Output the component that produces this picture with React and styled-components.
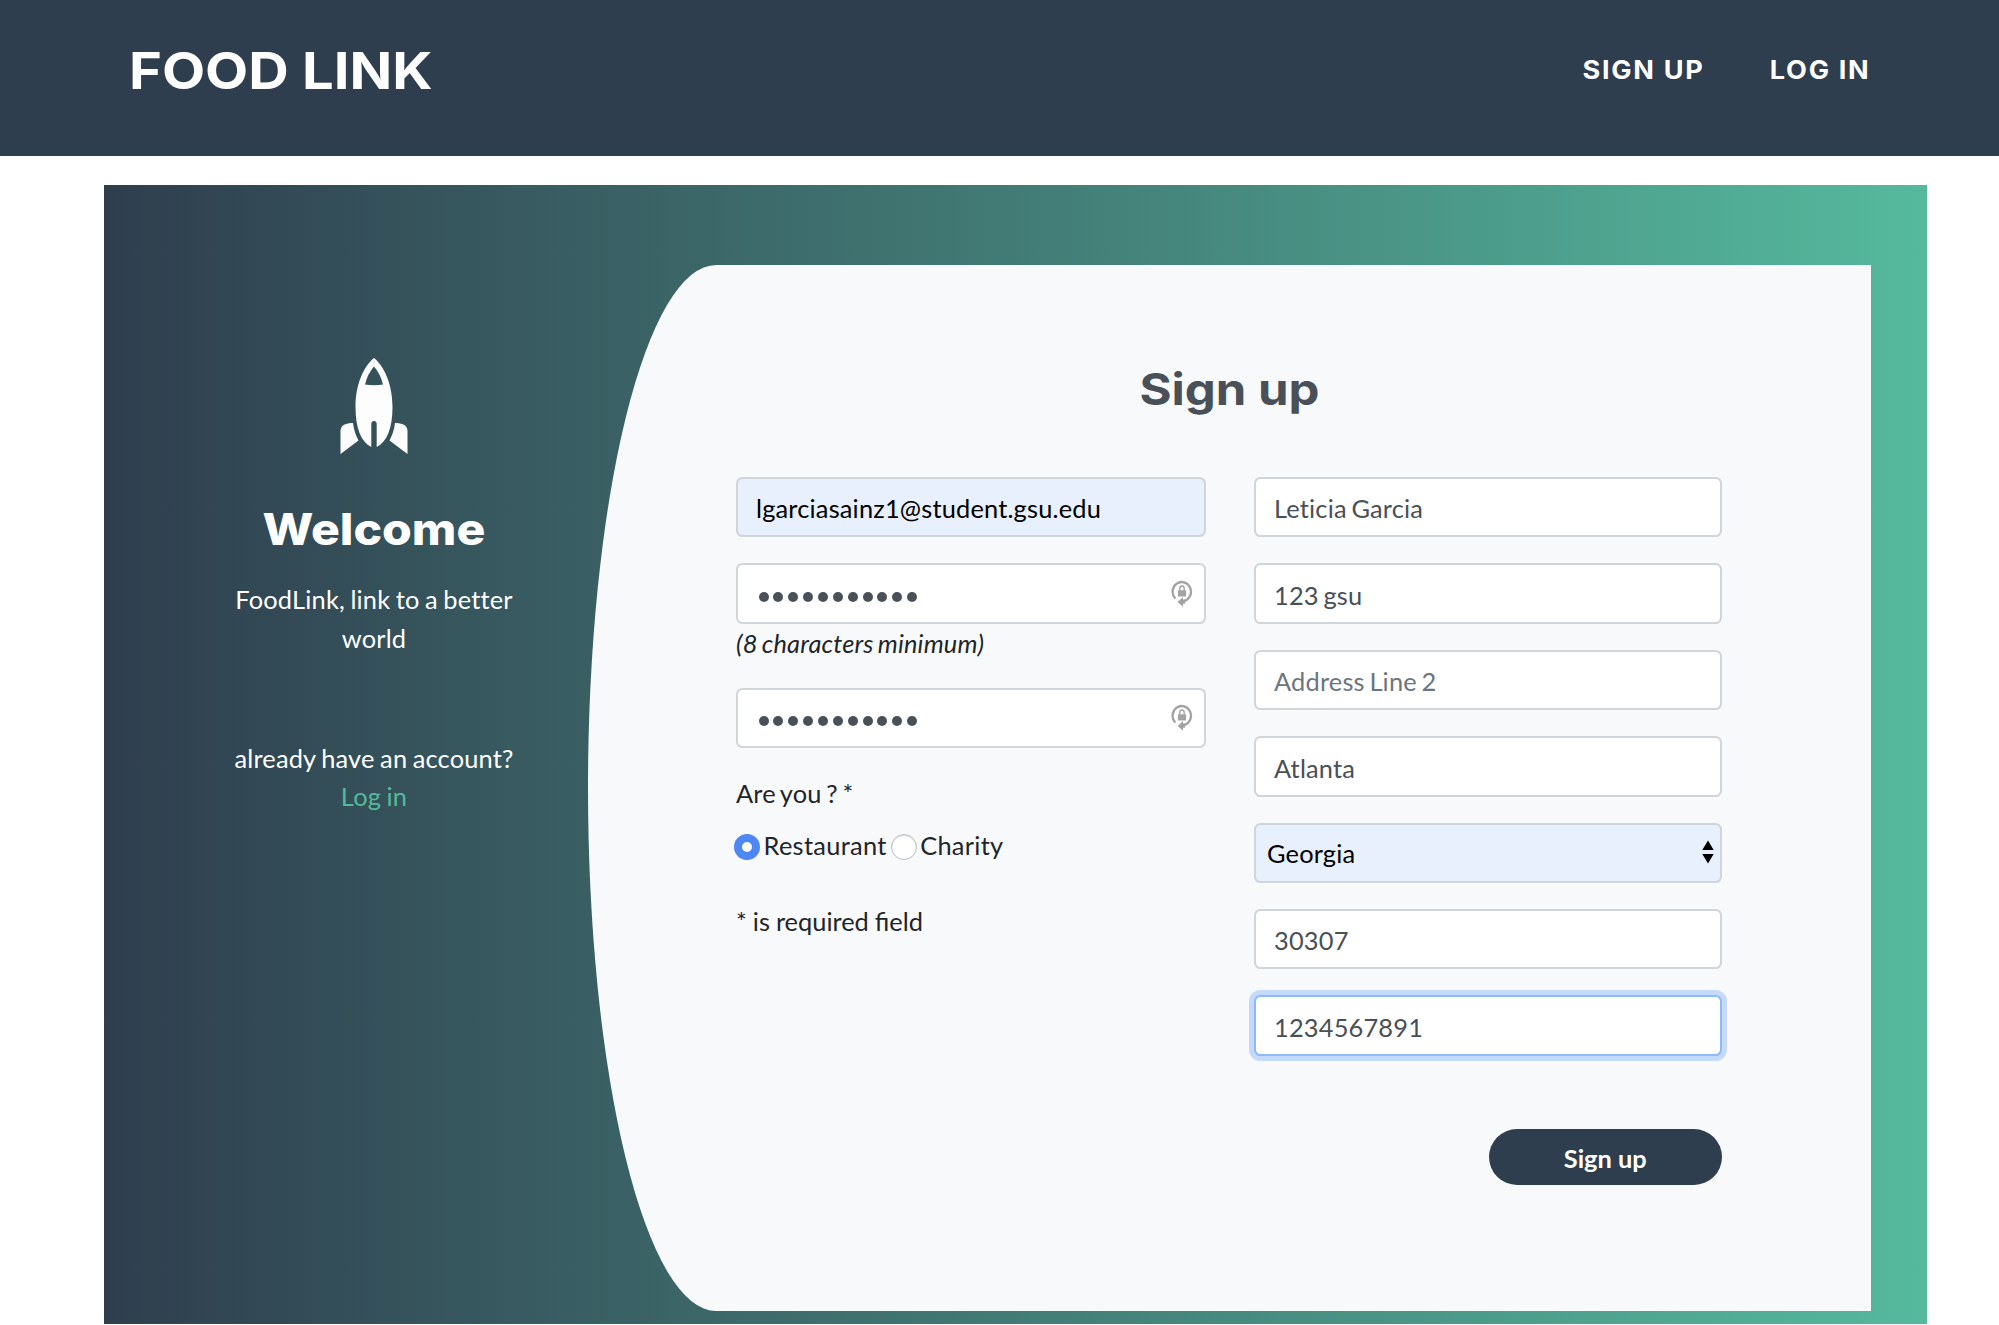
import React from 'react';
import styled, { createGlobalStyle } from 'styled-components';

const NAVY = '#2f3e4e';
const GREEN = '#55b99d';

const GlobalStyle = createGlobalStyle`
  *, *::before, *::after { box-sizing: border-box; }
  body {
    margin: 0;
    background: #fff;
    color: #212529;
    font: 400 25.4px/38.4px Lato, "Open Sans", sans-serif;
    letter-spacing: 0.18px;
    word-spacing: -2px;
  }
  h1, h2, h3, p { margin: 0; }
  a { color: inherit; text-decoration: none; }
`;

const Display = styled.span`
  display: inline-block;
  font-family: Inter, "Open Sans", sans-serif;
  font-size: ${(p) => p.$size}px;
  font-weight: ${(p) => p.$weight || 700};
  letter-spacing: ${(p) => p.$track || 0}px;
  word-spacing: 0;
  line-height: 1.2;
  white-space: nowrap;
  transform: scaleX(${(p) => p.$stretch || 1});
  transform-origin: ${(p) => p.$origin || 'center'};
`;

const Header = styled.header`
  display: flex;
  justify-content: space-between;
  align-items: flex-start;
  height: 156px;
  padding: 41px 129px 0 129px;
  background: ${NAVY};
  color: #fff;
`;

const Brand = styled.h1`
  line-height: 0;
`;

const Nav = styled.nav`
  display: flex;
  gap: 71px;
  padding-top: 9px;
`;

const Hero = styled.main`
  display: grid;
  grid-template-columns: 428px 1fr;
  width: 1823px;
  height: 1139.5px;
  margin: 28.5px 0 1px 104px;
  padding: 80px 56px 13.5px;
  background: linear-gradient(to right, ${NAVY}, ${GREEN});
`;

const Aside = styled.aside`
  display: flex;
  flex-direction: column;
  align-items: center;
  padding: 93px 64px 0;
  color: #fff;
  text-align: center;
`;

const Rocket = styled.svg`
  display: block;
  width: 68px;
  height: 96px;
  margin-bottom: 49px;
`;

const Tagline = styled.p`
  width: 300px;
  margin-top: 24.5px;
  word-spacing: -1.2px;
`;

const Account = styled.p`
  margin-top: 81.5px;
  word-spacing: -1.2px;
  a { display: block; color: ${GREEN}; }
`;

const Panel = styled.section`
  display: flex;
  flex-direction: column;
  padding: 95px 149px 0 148px;
  background: #f8f9fb;
  border-radius: 10% 0 0 10% / 50% 0 0 50%;
`;

const Title = styled.h3`
  display: flex;
  justify-content: center;
  height: 117.5px;
  padding-top: 3px;
  color: #495057;
`;

const Columns = styled.div`
  display: grid;
  grid-template-columns: 470px 468px;
  column-gap: 48px;
`;

const Column = styled.div`
  display: flex;
  flex-direction: column;
  gap: 26px;
`;

const Field = styled.div`
  display: flex;
  align-items: center;
  justify-content: space-between;
  height: 60.4px;
  padding: ${(p) => (p.$select ? '1px 6px 0 11px' : '3px 11px 0 18px')};
  border: 2px solid ${(p) => (p.$focus ? '#8dbaf8' : '#d0d5da')};
  border-radius: 6.4px;
  background: ${(p) => (p.$filled ? '#e8effd' : '#fff')};
  color: ${(p) => (p.$filled ? '#000' : p.$placeholder ? '#6c757d' : '#495057')};
  box-shadow: ${(p) => (p.$focus ? '0 0 0 5px #c5dafa' : 'none')};
  font-variant-ligatures: none;
`;

const Dots = styled.span`
  display: flex;
  gap: 4.87px;
  padding: 4px 0 0 2.5px;
`;

const Dot = styled.i`
  width: 10px;
  height: 10px;
  border-radius: 50%;
  background: #495057;
`;

const LockIcon = styled.svg`
  width: 22px;
  height: 28px;
  margin-top: -4px;
`;

const Hint = styled.em`
  display: block;
  height: 38px;
`;

const PasswordGroup = styled.div``;

const Question = styled.p`
  word-spacing: -2px;
`;

const Radios = styled.div`
  display: flex;
  align-items: center;
  margin: -13px 0 0 -2px;
  letter-spacing: 0.3px;
`;

const Radio = styled.span`
  width: 26px;
  height: 26px;
  margin: 5px 3.5px 0 ${(p) => (p.$checked ? 0 : 4)}px;
  border-radius: 50%;
  border: ${(p) => (p.$checked ? '8.5px solid #4d87f6' : '1.3px solid #bdbdbd')};
  background: #fff;
  box-shadow: ${(p) => (p.$checked ? 'none' : 'inset 0 1px 1px #ddd')};
`;

const Required = styled.p`
  margin-top: 12px;
  letter-spacing: 0;
  word-spacing: -0.5px;
`;

const Arrows = styled.svg`
  width: 12px;
  height: 24px;
  margin-top: -2px;
`;

const Submit = styled.button`
  align-self: flex-end;
  width: 233.5px;
  height: 56px;
  margin-top: 73.5px;
  padding: 1px 0 0;
  border: 0;
  border-radius: 28px;
  background: ${NAVY};
  color: #fff;
  font: 700 25.4px/38px Lato, sans-serif;
`;

const Password = () => (
  <Field>
    <Dots>{Array.from({ length: 11 }, (_, i) => <Dot key={i} />)}</Dots>
    <LockIcon viewBox="0 0 22 28" fill="none">
      <path d="M4.3 19.6A9.2 9.7 0 1 1 13.4 22" stroke="#a3a3a3" strokeWidth="2.3" />
      <path d="M6.6 22.9l5.4-4.9v2.6h2v4.2h-2v2.9z" fill="#a3a3a3" />
      <rect x="6.9" y="11.3" width="8.2" height="6.2" rx=".5" fill="#a3a3a3" />
      <path d="M8.8 11.5V9.2a2.2 2.2 0 0 1 4.4 0v2.3" stroke="#a3a3a3" strokeWidth="1.4" />
    </LockIcon>
  </Field>
);

export default function App() {
  return (
    <>
      <GlobalStyle />
      <Header>
        <Brand>
          <Display $size={50.5} $stretch={1.11} $origin="left">FOOD LINK</Display>
        </Brand>
        <Nav>
          <a href="#signup"><Display $size={25.4} $weight={750} $track={1.6} $stretch={1.065} $origin="right">SIGN UP</Display></a>
          <a href="#login"><Display $size={25.4} $weight={750} $track={1.6} $stretch={1.065} $origin="right">LOG IN</Display></a>
        </Nav>
      </Header>
      <Hero>
        <Aside>
          <Rocket viewBox="0 0 68 96" fill="#fdfdfd">
            <path
              fillRule="evenodd"
              d="M34 0C44 8 52.5 26 52.5 49C52.5 70 47 84 36.7 89V66Q36.7 63 34 63Q31.3 63 31.3 66V89C21 84 15.5 70 15.5 49C15.5 26 24 8 34 0ZM34 8.5Q27.5 16 25 26.5Q34 28 43 26.5Q40.5 16 34 8.5Z"
            />
            <path d="M13 65C6 65 .5 67 .5 73V96L18.5 82.5Q14 74 13 65Z" />
            <path d="M55 65C62 65 67.5 67 67.5 73V96L49.5 82.5Q54 74 55 65Z" />
          </Rocket>
          <h3><Display $size={44.4} $weight={800} $stretch={1.083}>Welcome</Display></h3>
          <Tagline>FoodLink, link to a better world</Tagline>
          <Account>
            already have an account? <a href="#login">Log in</a>
          </Account>
        </Aside>
        <Panel>
          <Title><Display $size={44.4} $stretch={1.105}>Sign up</Display></Title>
          <Columns>
            <Column>
              <Field $filled>lgarciasainz1@student.gsu.edu</Field>
              <PasswordGroup>
                <Password />
                <Hint>(8 characters minimum)</Hint>
              </PasswordGroup>
              <Password />
              <Question>Are you ? *</Question>
              <Radios>
                <Radio $checked />Restaurant
                <Radio />Charity
              </Radios>
              <Required>* is required field</Required>
            </Column>
            <Column>
              <Field>Leticia Garcia</Field>
              <Field>123 gsu</Field>
              <Field $placeholder>Address Line 2</Field>
              <Field>Atlanta</Field>
              <Field $filled $select>
                Georgia
                <Arrows viewBox="0 0 12 24" fill="#000">
                  <path d="M6 .5l5.7 9.5H.3zM6 23.5l5.7-9.5H.3z" />
                </Arrows>
              </Field>
              <Field>30307</Field>
              <Field $focus>1234567891</Field>
            </Column>
          </Columns>
          <Submit>Sign up</Submit>
        </Panel>
      </Hero>
    </>
  );
}
